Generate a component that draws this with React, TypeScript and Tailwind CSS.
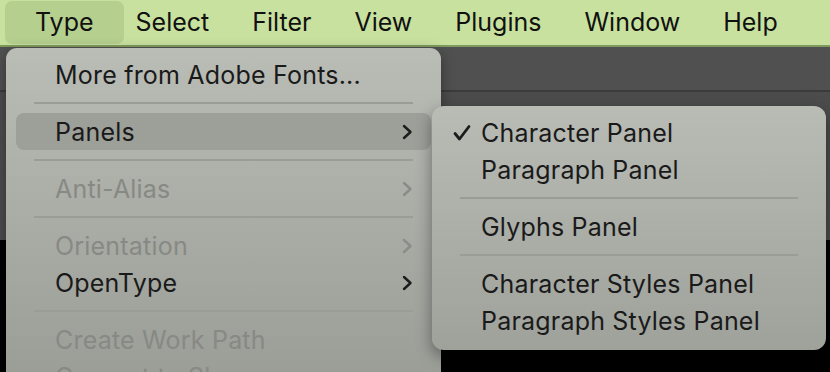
import React from 'react';

const font = { fontFamily: 'Inter, "Noto Sans", sans-serif' };

function Chevron({ dim }: { dim?: boolean }) {
  return (
    <svg width="12" height="16" viewBox="0 0 12 16" className="shrink-0">
      <path
        d="M3 2 L9.5 8 L3 14"
        fill="none"
        stroke={dim ? '#8a8c87' : '#1c1c1c'}
        strokeWidth="2.4"
        strokeLinecap="round"
        strokeLinejoin="round"
      />
    </svg>
  );
}

function Check() {
  return (
    <svg width="18" height="18" viewBox="0 0 18 18" className="absolute left-[11px] top-[10px]">
      <path
        d="M2 9.5 L6.5 15 L16 2.5"
        fill="none"
        stroke="#1c1c1c"
        strokeWidth="2.8"
        strokeLinecap="round"
        strokeLinejoin="round"
      />
    </svg>
  );
}

type Item =
  | { sep: true }
  | { label: string; disabled?: boolean; sub?: boolean; active?: boolean; checked?: boolean };

const mainItems: Item[] = [
  { label: 'More from Adobe Fonts...' },
  { sep: true },
  { label: 'Panels', sub: true, active: true },
  { sep: true },
  { label: 'Anti-Alias', sub: true, disabled: true },
  { sep: true },
  { label: 'Orientation', sub: true, disabled: true },
  { label: 'OpenType', sub: true },
  { sep: true },
  { label: 'Create Work Path', disabled: true },
  { label: 'Convert to Shape', disabled: true },
];

const subItems: Item[] = [
  { label: 'Character Panel', checked: true },
  { label: 'Paragraph Panel' },
  { sep: true },
  { label: 'Glyphs Panel' },
  { sep: true },
  { label: 'Character Styles Panel' },
  { label: 'Paragraph Styles Panel' },
];

function MenuRows({ items }: { items: Item[] }) {
  return (
    <>
      {items.map((it, i) =>
        'sep' in it ? (
          <div key={i} className="h-[20px] flex items-center px-[28px]">
            <div className="h-[2px] w-full bg-[#9a9c96]" />
          </div>
        ) : (
          <div
            key={i}
            className={`relative h-[37px] mx-[10px] pl-[39px] pr-[18px] flex items-center justify-between rounded-[8px] ${
              it.active ? 'bg-[#9d9f99]' : ''
            }`}
          >
            {it.checked && <Check />}
            <span
              className={`text-[25px] leading-none tracking-[0.2px] whitespace-nowrap pt-[2px] ${
                it.disabled ? 'text-[#878984]' : 'text-[#1a1a1a]'
              }`}
            >
              {it.label}
            </span>
            {it.sub && <Chevron dim={it.disabled} />}
          </div>
        )
      )}
    </>
  );
}

export default function App() {
  const bar = ['Select', 'Filter', 'View', 'Plugins', 'Window', 'Help'];
  return (
    <div className="relative w-[830px] h-[372px] overflow-hidden bg-black" style={font}>
      {/* menu bar */}
      <div className="h-[47px] bg-[#c8e19f] border-b-2 border-[#7f9a5c] flex items-stretch pl-[5px]">
        <div className="my-[1px] px-[30px] rounded-[7px] bg-[#b5cf8e] flex items-center text-[25px] text-[#111]">
          Type
        </div>
        <div className="flex items-center gap-[43px] ml-[12px] text-[25px] text-[#111]">
          {bar.map((b) => (
            <span key={b}>{b}</span>
          ))}
        </div>
      </div>

      {/* workspace behind the menus */}
      <div className="h-[193px] bg-[#505050] flex flex-col">
        <div className="h-[45px] border-b-2 border-[#3b3b3b]" />
        <div className="flex-1 bg-[#4c4c4c]" />
      </div>

      {/* Type menu */}
      <div className="absolute left-[6px] top-[48px] w-[435px] h-[340px] rounded-t-[11px] bg-gradient-to-b from-[#babcb6] to-[#9a9c96] pt-[8px] shadow-[0_4px_14px_rgba(0,0,0,0.35)]">
        <MenuRows items={mainItems} />
      </div>

      {/* Panels submenu */}
      <div className="absolute left-[432px] top-[106px] w-[394px] h-[244px] rounded-[12px] bg-gradient-to-b from-[#b9bbb5] to-[#9fa19b] pt-[8px] shadow-[0_6px_16px_rgba(0,0,0,0.4)]">
        <MenuRows items={subItems} />
      </div>
    </div>
  );
}
